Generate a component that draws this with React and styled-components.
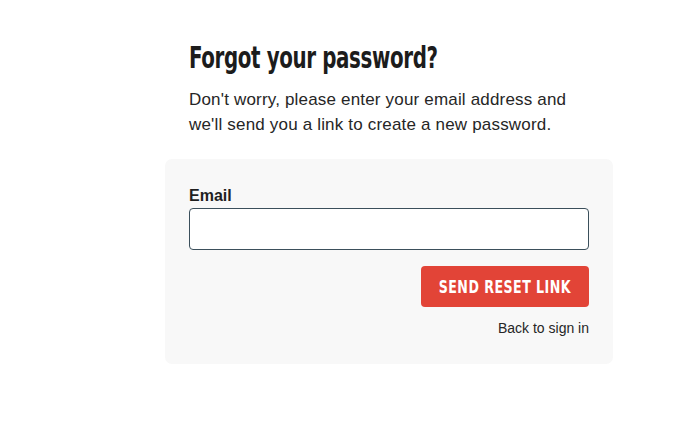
import React from "react";
import styled, { createGlobalStyle } from "styled-components";

const GlobalStyle = createGlobalStyle`
  html, body {
    margin: 0;
    padding: 0;
    background: #ffffff;
  }
  body {
    font-family: "Liberation Sans", Arial, sans-serif;
    color: #222222;
  }
`;

function App() {
  return (
    <>
      <GlobalStyle />
      <Page>
        <Column>
          <Intro>
            <Title>Forgot your password?</Title>
            <Lead>
              Don't worry, please enter your email address and
              <br />
              we'll send you a link to create a new password.
            </Lead>
          </Intro>

          <Card>
            <Label htmlFor="email">Email</Label>
            <Input id="email" type="email" />
            <Actions>
              <SubmitBtn type="button">
                <span>Send reset link</span>
              </SubmitBtn>
              <BackLink href="#">Back to sign in</BackLink>
            </Actions>
          </Card>
        </Column>
      </Page>
    </>
  );
}

export default App;

const Page = styled.div`
  width: 696px;
  height: 446px;
  padding: 40px 0 0 165px;
  box-sizing: border-box;
`;

const Column = styled.div`
  width: 448px;
  display: flex;
  flex-direction: column;
`;

const Intro = styled.div`
  padding: 0 24px;
`;

const Title = styled.h1`
  margin: 0;
  display: inline-block;
  font-family: "DejaVu Sans Condensed", "DejaVu Sans", sans-serif;
  font-stretch: condensed;
  font-weight: 700;
  font-size: 30px;
  line-height: 36px;
  color: #1c1c1c;
  letter-spacing: -0.5px;
  transform: scaleX(0.735);
  transform-origin: left center;
  white-space: nowrap;
`;

const Lead = styled.p`
  margin: 11px 0 0;
  font-size: 17px;
  line-height: 25px;
  letter-spacing: 0.18px;
  color: #262626;
`;

const Card = styled.div`
  margin-top: 22px;
  background: #f8f8f8;
  border-radius: 7px;
  padding: 27px 24px 27px;
  display: flex;
  flex-direction: column;
`;

const Label = styled.label`
  font-weight: 700;
  font-size: 16px;
  line-height: 20px;
  color: #1f1f1f;
`;

const Input = styled.input`
  margin-top: 2px;
  height: 42px;
  box-sizing: border-box;
  border: 1px solid #3b4f5b;
  border-radius: 4px;
  background: #ffffff;
  outline: none;
`;

const Actions = styled.div`
  margin-top: 16px;
  display: flex;
  flex-direction: column;
  align-items: flex-end;
`;

const SubmitBtn = styled.button`
  width: 168px;
  height: 41px;
  border: none;
  border-radius: 4px;
  background: #e24437;
  color: #ffffff;
  display: flex;
  align-items: center;
  justify-content: center;
  padding: 0;
  cursor: pointer;

  span {
    display: inline-block;
    font-family: "DejaVu Sans Condensed", "DejaVu Sans", sans-serif;
    font-weight: 700;
    font-size: 18px;
    letter-spacing: 0.6px;
    text-transform: uppercase;
    transform: scaleX(0.78);
    white-space: nowrap;
  }
`;

const BackLink = styled.a`
  margin-top: 12px;
  font-size: 14px;
  line-height: 18px;
  color: #262626;
  text-decoration: none;
`;
